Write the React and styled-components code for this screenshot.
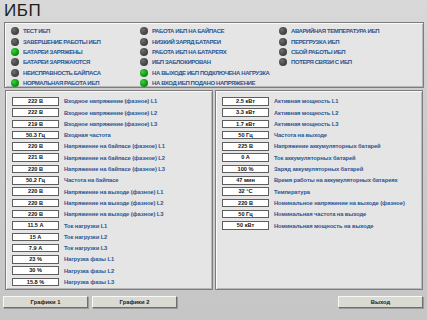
import React from "react";
import styled, { createGlobalStyle } from "styled-components";

const GlobalStyle = createGlobalStyle`
  html, body {
    margin: 0;
    padding: 0;
  }
  body {
    font-family: "Liberation Sans", Arial, sans-serif;
  }
`;

const Page = styled.div`
  width: 427px;
  height: 320px;
  box-sizing: border-box;
  overflow: hidden;
  background: linear-gradient(#d9d9d9, #cdcdcd 30%, #c6c6c6);
  display: flex;
  flex-direction: column;
`;

const Title = styled.div`
  height: 22px;
  padding-left: 4px;
  font-size: 17px;
  line-height: 22px;
  color: #1e1e1e;
  letter-spacing: 0.5px;
`;

const Panel = styled.div`
  box-sizing: border-box;
  background: #e5e5e5;
  border: 1px solid #7d7d7d;
  box-shadow: inset 1px 1px 0 #fafafa, inset -1px -1px 0 #b8b8b8;
`;

const StatusPanel = styled(Panel)`
  margin: 0 3px 0 4px;
  height: 66px;
  padding: 3px 0 0 6px;
  display: grid;
  grid-template-columns: 129px 139px 1fr;
`;

const StatusColumn = styled.div`
  display: flex;
  flex-direction: column;
`;

const Indicator = styled.div`
  height: 10.35px;
  display: flex;
  align-items: center;
  gap: 4px;
`;

const Lamp = styled.span`
  width: 8px;
  height: 8px;
  border-radius: 50%;
  flex: none;
  background: ${(p) =>
    p.$on
      ? "radial-gradient(circle at 35% 35%, #3fcf3f, #0f9a12 55%, #0a6d0c)"
      : "radial-gradient(circle at 35% 35%, #6e6e6e, #474747 55%, #343434)"};
`;

const IndicatorText = styled.span`
  font-size: 6px;
  font-weight: 700;
  letter-spacing: -0.4px;
  color: #2b5592;
  white-space: nowrap;
`;

const Lower = styled.div`
  display: flex;
  gap: 2px;
  margin: 2px 4px 0 5px;
  height: 200px;
`;

const DataPanel = styled(Panel)`
  flex: 1;
  padding: 6px 0 0 6px;
  display: flex;
  flex-direction: column;
  gap: 2.8px;
`;

const Row = styled.div`
  display: flex;
  align-items: center;
  gap: 5px;
  height: 8.5px;
`;

const Value = styled.div`
  box-sizing: border-box;
  width: 47px;
  height: 8.5px;
  flex: none;
  background: #fff;
  border: 1px solid #5e5e5e;
  font-size: 5.6px;
  font-weight: 700;
  line-height: 6.5px;
  text-align: center;
  color: #111;
`;

const Label = styled.span`
  font-size: 5.8px;
  font-weight: 700;
  color: #2b5592;
  white-space: nowrap;
  letter-spacing: -0.1px;
`;

const Buttons = styled.div`
  display: flex;
  margin: 6px 4px 0 3px;
  gap: 4px;
`;

const Button = styled.button`
  width: 85px;
  height: 12px;
  padding: 0;
  box-sizing: border-box;
  background: #dad9d2;
  border: 1px solid;
  border-color: #f8f8f8 #6e6e6e #6e6e6e #f8f8f8;
  box-shadow: 1px 1px 0 #9a9a9a;
  font-family: "Liberation Sans", Arial, sans-serif;
  font-size: 5.8px;
  font-weight: 700;
  color: #1a1a1a;
  margin-left: ${(p) => (p.$push ? "auto" : "0")};
`;

const statuses = [
  [
    ["ТЕСТ ИБП", false],
    ["ЗАВЕРШЕНИЕ РАБОТЫ ИБП", false],
    ["БАТАРЕИ ЗАРЯЖЕНЫ", true],
    ["БАТАРЕИ ЗАРЯЖАЮТСЯ", false],
    ["НЕИСПРАВНОСТЬ БАЙПАСА", false],
    ["НОРМАЛЬНАЯ РАБОТА ИБП", true],
  ],
  [
    ["РАБОТА ИБП НА БАЙПАСЕ", false],
    ["НИЗКИЙ ЗАРЯД БАТАРЕИ", false],
    ["РАБОТА ИБП НА БАТАРЕЯХ", false],
    ["ИБП ЗАБЛОКИРОВАН", false],
    ["НА ВЫХОДЕ ИБП ПОДКЛЮЧЕНА НАГРУЗКА", true],
    ["НА ВХОД ИБП ПОДАНО НАПРЯЖЕНИЕ", true],
  ],
  [
    ["АВАРИЙНАЯ ТЕМПЕРАТУРА ИБП", false],
    ["ПЕРЕГРУЗКА ИБП", false],
    ["СБОЙ РАБОТЫ ИБП", false],
    ["ПОТЕРЯ СВЯЗИ С ИБП", false],
  ],
];

const leftRows = [
  ["222 В", "Входное напряжение (фазное) L1"],
  ["222 В", "Входное напряжение (фазное) L2"],
  ["219 В", "Входное напряжение (фазное) L3"],
  ["50.3 Гц", "Входная частота"],
  ["220 В", "Напряжение на байпасе (фазное) L1"],
  ["221 В", "Напряжение на байпасе (фазное) L2"],
  ["220 В", "Напряжение на байпасе (фазное) L3"],
  ["50.2 Гц", "Частота на байпасе"],
  ["220 В", "Напряжение на выходе (фазное) L1"],
  ["220 В", "Напряжение на выходе (фазное) L2"],
  ["220 В", "Напряжение на выходе (фазное) L3"],
  ["11.5 А", "Ток нагрузки L1"],
  ["15 А", "Ток нагрузки L2"],
  ["7.9 А", "Ток нагрузки L3"],
  ["23 %", "Нагрузка фазы L1"],
  ["30 %", "Нагрузка фазы L2"],
  ["15.8 %", "Нагрузка фазы L3"],
];

const rightRows = [
  ["2.5 кВт", "Активная мощность L1"],
  ["3.3 кВт", "Активная мощность L2"],
  ["1.7 кВт", "Активная мощность L3"],
  ["50 Гц", "Частота на выходе"],
  ["225 В", "Напряжение аккумуляторных батарей"],
  ["0 А", "Ток аккумуляторных батарей"],
  ["100 %", "Заряд аккумуляторных батарей"],
  ["47 мин", "Время работы на аккумуляторных батареях"],
  ["32 °C", "Температура"],
  ["220 В", "Номинальное напряжение на выходе (фазное)"],
  ["50 Гц", "Номинальная частота на выходе"],
  ["50 кВт", "Номинальная мощность на выходе"],
];

const DataList = ({ rows }) => (
  <DataPanel>
    {rows.map(([value, label], i) => (
      <Row key={i}>
        <Value>{value}</Value>
        <Label>{label}</Label>
      </Row>
    ))}
  </DataPanel>
);

export default function App() {
  return (
    <Page>
      <GlobalStyle />
      <Title>ИБП</Title>
      <StatusPanel>
        {statuses.map((col, c) => (
          <StatusColumn key={c}>
            {col.map(([text, on]) => (
              <Indicator key={text}>
                <Lamp $on={on} />
                <IndicatorText>{text}</IndicatorText>
              </Indicator>
            ))}
          </StatusColumn>
        ))}
      </StatusPanel>
      <Lower>
        <DataList rows={leftRows} />
        <DataList rows={rightRows} />
      </Lower>
      <Buttons>
        <Button>Графики 1</Button>
        <Button>Графики 2</Button>
        <Button $push>Выход</Button>
      </Buttons>
    </Page>
  );
}
